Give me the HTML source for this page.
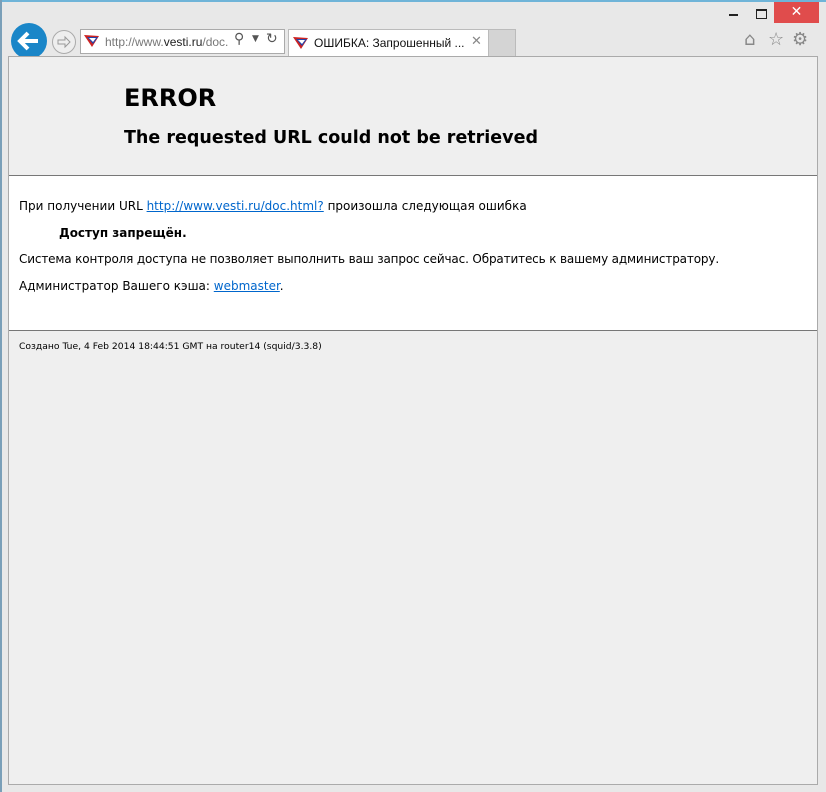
<!DOCTYPE html>
<html><head><meta charset="utf-8"><style>
body{margin:0;width:826px;height:792px;background:#e8e8e8;position:relative;overflow:hidden;font-family:"DejaVu Sans","Liberation Sans",sans-serif;}
.a{position:absolute;white-space:nowrap}
a{color:#0066cc;text-decoration:underline}
</style></head><body>
<div class="a" style="left:0;top:0;width:826px;height:2px;background:#6fb4d8"></div>
<div class="a" style="left:0;top:0;width:2px;height:792px;background:#7a9fb8"></div>
<div class="a" style="left:774px;top:2px;width:45px;height:21px;background:#e04c4c;color:#fff;font-size:14px;text-align:center;line-height:21px">✕</div>
<div class="a" style="left:729px;top:14px;width:9px;height:2px;background:#222"></div>
<div class="a" style="left:756px;top:9px;width:9px;height:7px;border:1px solid #222;border-top-width:2px"></div>
<div class="a" style="left:11px;top:23px;width:36px;height:36px;border-radius:50%;background:#1a86c8"></div>
<svg class="a" style="left:11px;top:23px" width="36" height="36"><path d="M27 18H10M17 10l-8 8 8 8" stroke="#fff" stroke-width="4" fill="none"/></svg>
<div class="a" style="left:52px;top:30px;width:22px;height:22px;border-radius:50%;border:1px solid #aaa;background:#eee"></div>
<svg class="a" style="left:52px;top:30px" width="24" height="24"><path d="M6 10h7V7l5 5-5 5v-3H6z" stroke="#999" fill="none"/></svg>
<div class="a" style="left:80px;top:29px;width:203px;height:23px;border:1px solid #aaa;background:#fff"></div>
<svg class="a" style="left:84px;top:34px" width="16" height="14"><path d="M0 1L15 2 8 13z" fill="#c22"/><path d="M3 3L14 3 9 10z" fill="#2244aa"/><path d="M5 4L12 4 9 8z" fill="#fff"/></svg>
<div class="a" style="left:105px;top:35px;font-size:12px;color:#777;width:123px;overflow:hidden;font-family:'Liberation Sans',sans-serif">http://www.<span style="color:#222">vesti.ru</span>/doc.html</div>
<div class="a" style="left:234px;top:31px;font-size:14px;color:#555">⚲</div>
<div class="a" style="left:252px;top:34px;font-size:9px;color:#555">▼</div>
<div class="a" style="left:266px;top:31px;font-size:14px;color:#555">↻</div>
<div class="a" style="left:288px;top:29px;width:199px;height:27px;border:1px solid #bbb;border-bottom:none;background:#fff"></div>
<svg class="a" style="left:293px;top:36px" width="16" height="14"><path d="M0 1L15 2 8 13z" fill="#c22"/><path d="M3 3L14 3 9 10z" fill="#2244aa"/><path d="M5 4L12 4 9 8z" fill="#fff"/></svg>
<div class="a" style="left:314px;top:36px;font-size:12px;color:#111;font-family:'Liberation Sans',sans-serif">ОШИБКА: Запрошенный ...</div>
<div class="a" style="left:471px;top:34px;font-size:13px;color:#888">✕</div>
<div class="a" style="left:488px;top:29px;width:26px;height:27px;background:#d4d4d4;border:1px solid #bbb;border-bottom:none"></div>
<div class="a" style="left:744px;top:29px;font-size:18px;color:#888">⌂</div>
<div class="a" style="left:768px;top:29px;font-size:18px;color:#888">☆</div>
<div class="a" style="left:792px;top:29px;font-size:18px;color:#888">⚙</div>
<div class="a" style="left:8px;top:56px;width:808px;height:727px;border:1px solid #aaa;background:#efefef"></div>
<div class="a" style="left:9px;top:175px;width:808px;height:154px;background:#fff;border-top:1px solid #777;border-bottom:1px solid #777"></div>
<div class="a" style="left:124px;top:84px;font-size:24px;font-weight:bold;color:#000">ERROR</div>
<div class="a" style="left:124px;top:128px;font-size:17.5px;font-weight:bold;color:#000">The requested URL could not be retrieved</div>
<div class="a" style="left:19px;top:199px;font-size:12px;color:#000">При получении URL <a>http://www.vesti.ru/doc.html?</a> произошла следующая ошибка</div>
<div class="a" style="left:59px;top:226px;font-size:12px;font-weight:bold;color:#000">Доступ запрещён.</div>
<div class="a" style="left:19px;top:252px;font-size:12px;color:#000;letter-spacing:-0.15px">Система контроля доступа не позволяет выполнить ваш запрос сейчас. Обратитесь к вашему администратору.</div>
<div class="a" style="left:19px;top:279px;font-size:12px;color:#000">Администратор Вашего кэша: <a>webmaster</a>.</div>
<div class="a" style="left:19px;top:341px;font-size:9.2px;color:#000">Создано Tue, 4 Feb 2014 18:44:51 GMT на router14 (squid/3.3.8)</div>
</body></html>
